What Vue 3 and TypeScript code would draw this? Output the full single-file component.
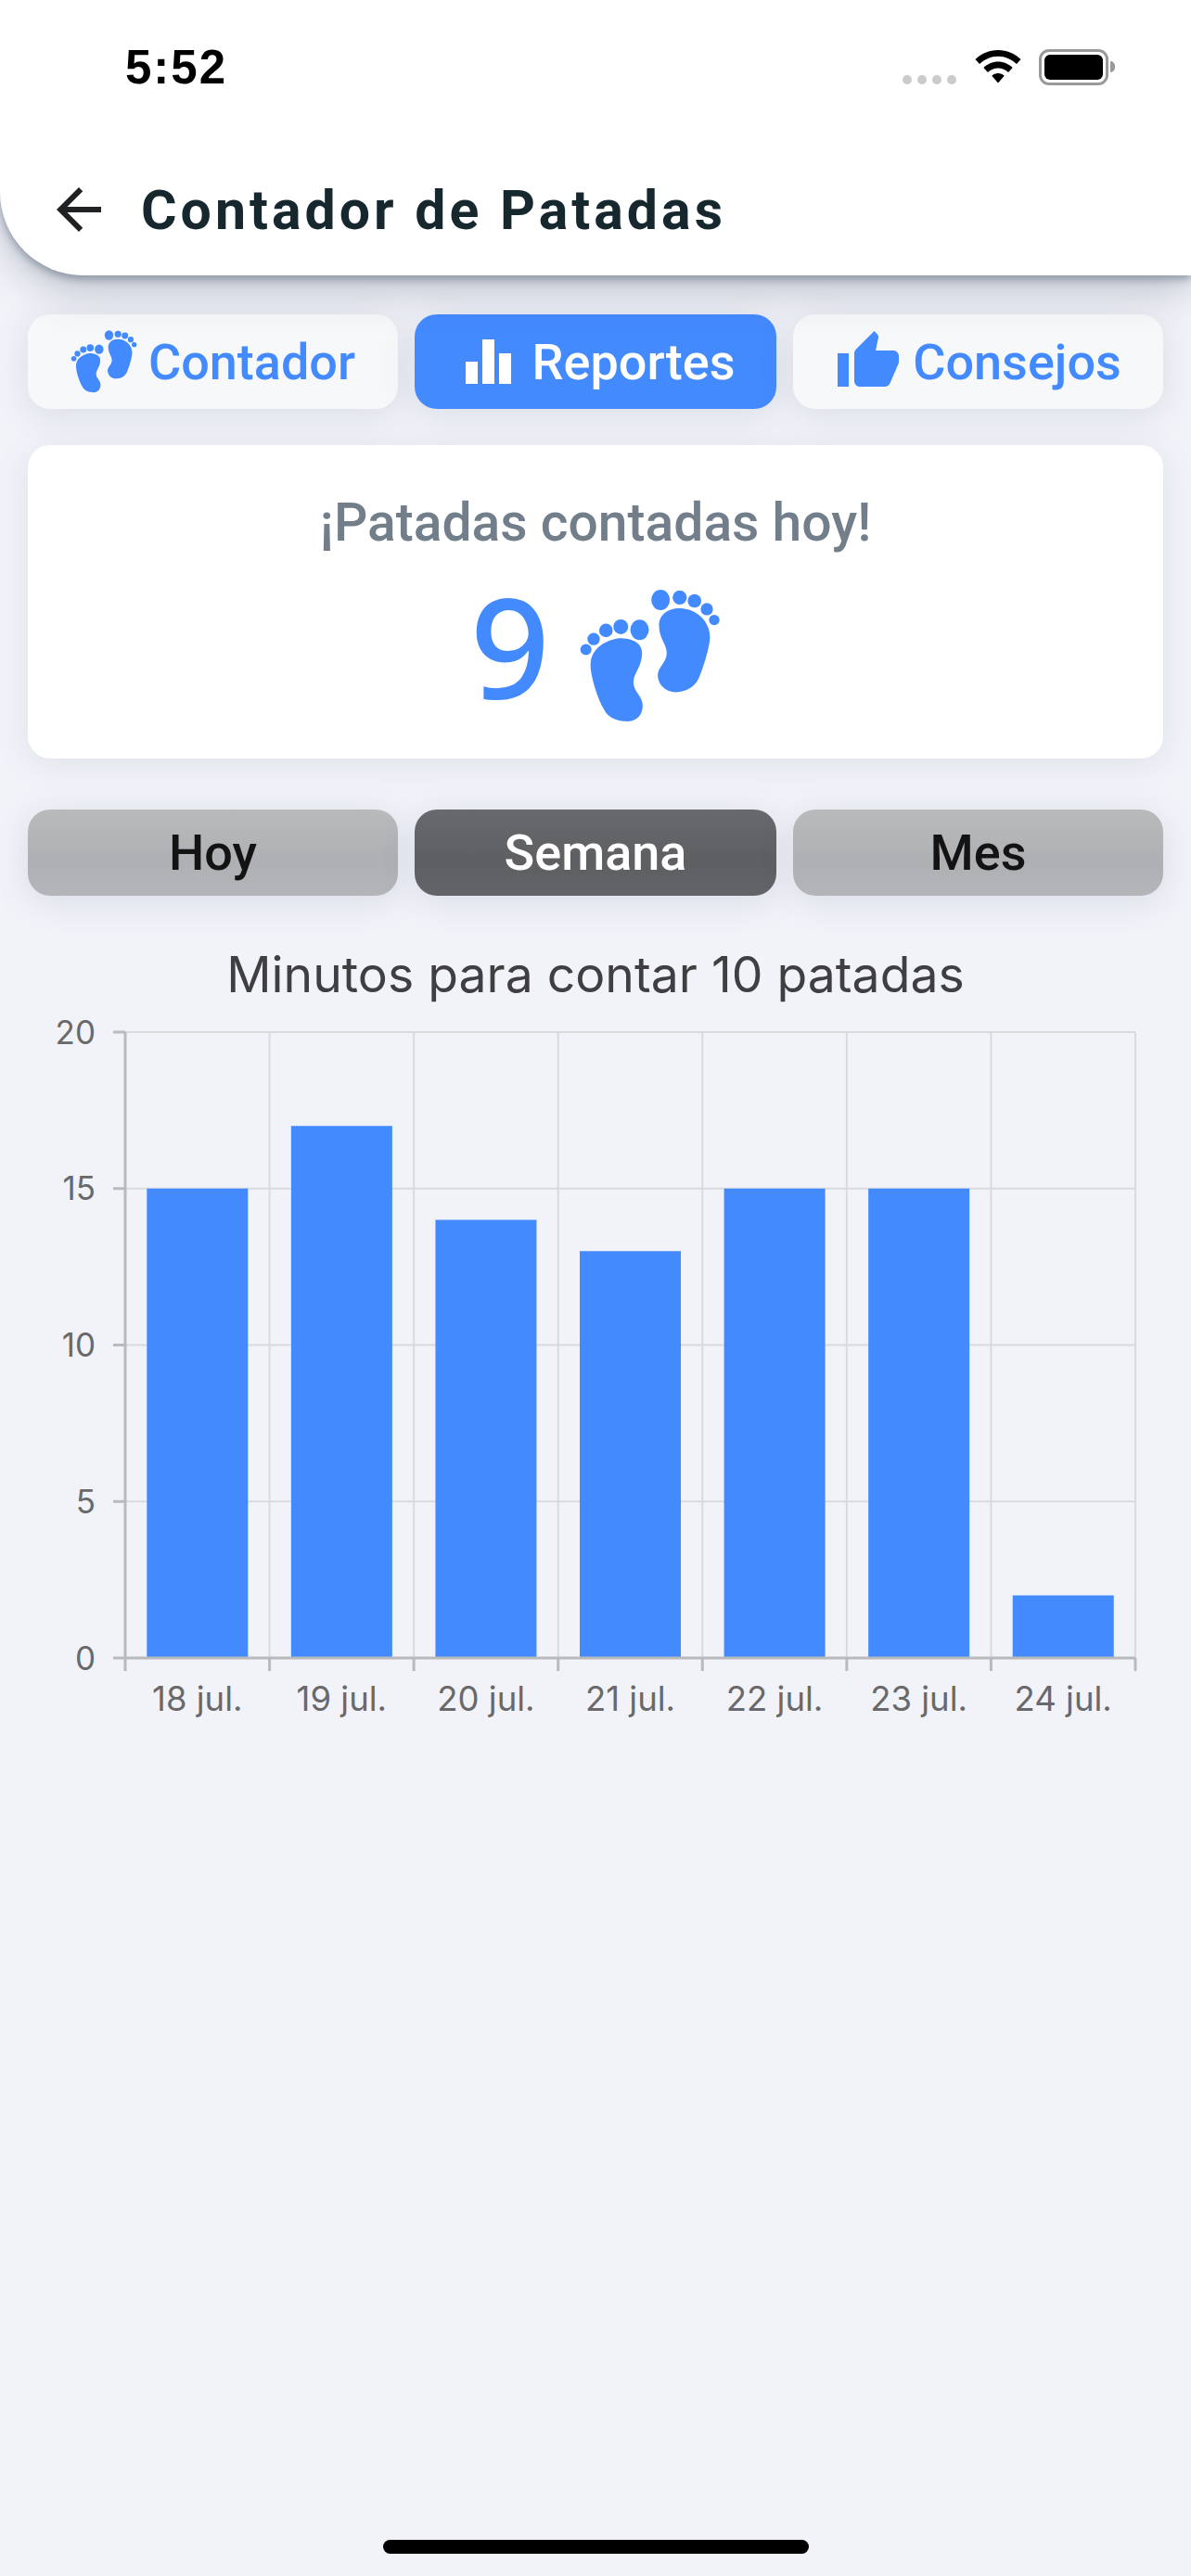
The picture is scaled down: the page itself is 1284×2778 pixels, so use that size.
<script setup lang="ts">
const tabs = ['Contador', 'Reportes', 'Consejos']
const ranges = [
  { label: 'Hoy', active: false },
  { label: 'Semana', active: true },
  { label: 'Mes', active: false },
]
const data = [
  { label: '18 jul.', value: 15 },
  { label: '19 jul.', value: 17 },
  { label: '20 jul.', value: 14 },
  { label: '21 jul.', value: 13 },
  { label: '22 jul.', value: 15 },
  { label: '23 jul.', value: 15 },
  { label: '24 jul.', value: 2 },
]
const left = 135
const right = 1224
const top = 40
const bottom = 715
const colW = (right - left) / data.length
const unit = (bottom - top) / 20
const yTicks = [0, 5, 10, 15, 20]
const xLines = Array.from({ length: data.length + 1 }, (_, i) => left + i * colW)
const yPos = (v: number) => bottom - v * unit
</script>

<template>
  <div class="page">
    <header class="header">
      <div class="status">
        <span class="time">5:52</span>
        <div class="status-icons">
          <div class="dots"><i></i><i></i><i></i><i></i></div>
          <svg class="wifi" viewBox="0 0 50 36" width="50" height="36">
            <path d="M25 0C15.500 0 7 3.800 0.500 10L5 15C10.500 10 17.500 6.800 25 6.800S39.500 10 45 15L49.500 10C43 3.800 34.500 0 25 0Z" />
            <path d="M25 12.500C19 12.500 13.500 15 9.300 19L14 24C17 21.200 20.800 19.500 25 19.500S33 21.200 36 24L40.700 19C36.500 15 31 12.500 25 12.500Z" />
            <path d="M25 25C22.500 25 20 26 18.300 27.800L25 35.500L31.700 27.800C30 26 27.500 25 25 25Z" />
          </svg>
          <div class="battery"><div class="battery-fill"></div></div>
          <div class="battery-cap"></div>
        </div>
      </div>
      <div class="toolbar">
        <svg class="back" viewBox="0 0 24 24" width="72" height="72">
          <path d="M20 11H7.830l5.590-5.590L12 4l-8 8 8 8 1.410-1.410L7.830 13H20v-2z" />
        </svg>
        <h1 class="title">Contador de Patadas</h1>
      </div>
    </header>

    <main class="content">
      <div class="row">
        <button class="btn tab">
          <svg class="feet-small" viewBox="0 0 460 430">
            <use href="#feet" />
          </svg>
          <span>{{ tabs[0] }}</span>
        </button>
        <button class="btn tab tab-active">
          <svg class="bars-icon" viewBox="0 0 49 48" width="49" height="48">
            <rect x="0" y="24" width="13" height="24" />
            <rect x="18" y="0" width="13" height="48" />
            <rect x="36" y="15" width="13" height="33" />
          </svg>
          <span>{{ tabs[1] }}</span>
        </button>
        <button class="btn tab">
          <svg class="thumb" viewBox="0 0 24 24" width="72" height="72">
            <path d="M1 21h4V9H1v12zm22-11c0-1.100-.9-2-2-2h-6.310l.95-4.570.03-.32c0-.41-.17-.79-.44-1.060L14.170 1 7.590 7.590C7.220 7.950 7 8.450 7 9v10c0 1.100.9 2 2 2h9c.83 0 1.540-.5 1.840-1.220l3.020-7.050c.09-.23.14-.47.14-.73v-2z" />
          </svg>
          <span>{{ tabs[2] }}</span>
        </button>
      </div>

      <section class="card">
        <p class="card-label">¡Patadas contadas hoy!</p>
        <div class="count">
          <span class="count-num">9</span>
          <svg class="feet-big" viewBox="0 0 460 430">
            <defs>
              <g id="feet">
                <path d="M325 60C380 60 425 100 425 155C425 185 400 265 385 295C365 325 335 332 315 332C275 332 255 300 256 275C257 250 285 235 285 205C285 175 260 160 260 115C260 80 290 60 325 60Z" />
                <ellipse cx="265" cy="33" rx="30" ry="33" />
                <circle cx="327" cy="25" r="23" />
                <circle cx="375" cy="36" r="22" />
                <circle cx="415" cy="63" r="20" />
                <circle cx="439" cy="98" r="17" />
                <path d="M130 157C85 165 38 190 38 245C38 280 60 350 80 385C95 420 130 427 160 427C190 425 207 405 207 375C207 345 177 330 177 300C177 270 205 250 205 205C205 170 170 157 130 157Z" />
                <ellipse cx="197" cy="130" rx="30" ry="33" />
                <circle cx="136" cy="120" r="24" />
                <circle cx="88" cy="132" r="22" />
                <circle cx="48" cy="160" r="20" />
                <circle cx="23" cy="194" r="18" />
              </g>
            </defs>
            <use href="#feet" />
          </svg>
        </div>
      </section>

      <div class="row filters">
        <button v-for="r in ranges" :key="r.label" class="btn range" :class="{ 'range-active': r.active }">{{ r.label }}</button>
      </div>

      <h2 class="chart-title">Minutos para contar 10 patadas</h2>
      <svg class="chart" viewBox="0 0 1284 800" width="1284" height="800">
        <line v-for="(x, i) in xLines.slice(1)" :key="'gx' + i" :x1="x" :x2="x" :y1="top" :y2="bottom" class="grid" />
        <line v-for="t in yTicks.slice(1)" :key="'gy' + t" :x1="left" :x2="right" :y1="yPos(t)" :y2="yPos(t)" class="grid" />
        <rect
          v-for="(d, i) in data"
          :key="d.label"
          class="bar"
          :x="left + i * colW + 23.3"
          :y="yPos(d.value)"
          width="109"
          :height="d.value * unit"
        />
        <line :x1="left" :x2="left" :y1="top" :y2="bottom + 14" class="axis" />
        <line :x1="left - 13" :x2="right" :y1="bottom" :y2="bottom" class="axis" />
        <line :x1="left - 13" :x2="left" :y1="top" :y2="top" class="axis" />
        <line v-for="t in [5, 10, 15]" :key="'ty' + t" :x1="left - 13" :x2="left" :y1="yPos(t)" :y2="yPos(t)" class="axis" />
        <line v-for="(x, i) in xLines.slice(1)" :key="'tx' + i" :x1="x" :x2="x" :y1="bottom" :y2="bottom + 14" class="axis" />
        <text v-for="t in yTicks" :key="'ly' + t" x="103" :y="yPos(t) + 12.500" text-anchor="end" class="tick">{{ t }}</text>
        <text v-for="(d, i) in data" :key="'lx' + d.label" :x="left + (i + 0.5) * colW" :y="bottom + 57" text-anchor="middle" class="tick tick-x">{{ d.label }}</text>
      </svg>
    </main>

    <div class="home-bar"></div>
  </div>
</template>

<style>
html, body { margin: 0; padding: 0; background: #f2f3f9; }
</style>

<style scoped>
.page {
  width: 1284px;
  height: 2778px;
  position: relative;
  overflow: hidden;
  background: #f2f3f9;
  font-family: Roboto, "Liberation Sans", sans-serif;
}
.header {
  height: 297px;
  box-sizing: border-box;
  background: #fff;
  border-bottom-left-radius: 90px;
  box-shadow: 0 4px 10px rgba(50, 70, 90, 0.4), 0 14px 44px rgba(70, 85, 105, 0.34);
  position: relative;
  z-index: 1;
}
.status {
  height: 150px;
  display: flex;
  justify-content: space-between;
  align-items: flex-start;
  padding: 47px 82px 0 135px;
  box-sizing: border-box;
}
.time {
  font-family: "Liberation Sans", sans-serif;
  font-weight: 700;
  font-size: 51px;
  line-height: 52px;
  letter-spacing: 2px;
  color: #000;
}
.status-icons { display: flex; align-items: flex-start; padding-top: 6px; }
.dots { display: flex; gap: 6px; margin-top: 28px; margin-right: 20px; }
.dots i { width: 10px; height: 10px; border-radius: 50%; background: #cbcbcb; display: block; }
.wifi { fill: #000; margin: 1px 19px 0 0; }
.battery {
  width: 75px;
  height: 39px;
  box-sizing: border-box;
  border: 3px solid #999;
  border-radius: 11px;
  padding: 3px;
}
.battery-fill { width: 100%; height: 100%; background: #000; border-radius: 6px; }
.battery-cap { width: 5px; height: 12px; margin: 13px 0 0 2px; background: #999; border-radius: 0 5px 5px 0; }
.toolbar { display: flex; align-items: center; height: 147px; padding: 5px 0 0 49px; box-sizing: border-box; }
.back { fill: #1f2123; flex: none; }
.title {
  margin: 0 0 0 31px;
  font-size: 59px;
  font-weight: 700;
  letter-spacing: 4px;
  color: #17272e;
}
.content { padding: 42px 30px 0; }
.row {
  display: grid;
  grid-template-columns: 399px 390px 399px;
  gap: 18px;
}
.btn {
  border: none;
  padding: 0;
  margin: 0;
  font-family: Roboto, "Liberation Sans", sans-serif;
  font-weight: 500;
  display: flex;
  align-items: center;
  justify-content: center;
}
.tab {
  height: 102px;
  font-size: 54px;
  background: #f7f8fa;
  color: #448aff;
  border-radius: 24px;
  box-shadow: 0 6px 36px rgba(90, 105, 135, 0.16);
  gap: 12px;
}
.tab-active { background: #448aff; color: #fff; }
.feet-small { width: 72px; height: 68px; fill: #448aff; }
.bars-icon { fill: #fff; margin: 0 10px 0 11px; }
.thumb { fill: #448aff; }
.card {
  height: 338px;
  margin-top: 39px;
  background: #fff;
  border-radius: 24px;
  box-sizing: border-box;
  padding-top: 52px;
  box-shadow: 0 6px 36px rgba(90, 105, 135, 0.12);
  text-align: center;
}
.card-label {
  margin: 0;
  font-size: 57px;
  font-weight: 500;
  line-height: 64px;
  color: #727f8a;
}
.count { display: flex; justify-content: center; align-items: flex-start; margin-top: 35px; }
.count-num {
  font-family: "Noto Sans", sans-serif;
  font-weight: 500;
  font-size: 150px;
  line-height: 130px;
  color: #448aff;
  margin-right: 31px;
}
.feet-big { width: 153px; height: 143px; fill: #448aff; margin-top: 5px; }
.filters { margin-top: 55px; }
.range {
  height: 93px;
  font-size: 54px;
  background: linear-gradient(#b9babc, #afb0b3 60%, #b4b5b8);
  color: #131313;
  border-radius: 24px;
  box-shadow: 0 6px 36px rgba(90, 105, 135, 0.16);
}
.range-active { background: linear-gradient(#67696c, #5d5f62 60%, #626467); color: #fff; }
.chart-title {
  margin: 55px 0 0;
  text-align: center;
  font-family: Inter, sans-serif;
  font-weight: 400;
  font-size: 53.500px;
  line-height: 60px;
  color: #3f3f42;
}
.chart { display: block; margin: -8px 0 0 -30px; }
.grid { stroke: #d9dadc; stroke-width: 2; }
.axis { stroke: #b9babc; stroke-width: 3; }
.bar { fill: #448aff; }
.tick { font-family: Inter, sans-serif; font-size: 35px; fill: #69696b; }
.tick-x { font-size: 36.500px; }
.home-bar {
  position: absolute;
  left: 413px;
  width: 459px;
  top: 2739px;
  height: 15px;
  border-radius: 8px;
  background: #000;
}
</style>
